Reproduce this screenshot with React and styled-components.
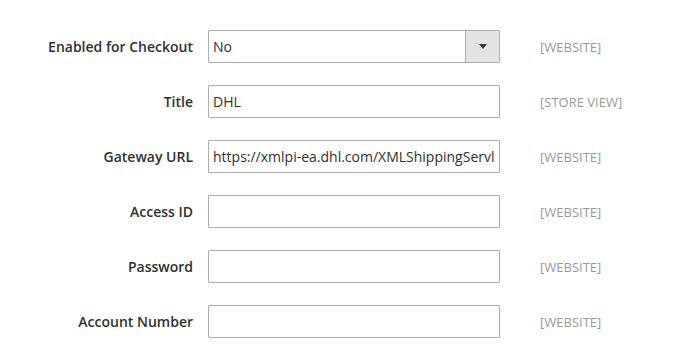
import React from "react";
import styled, { createGlobalStyle } from "styled-components";

const Global = createGlobalStyle`
  html, body { margin: 0; padding: 0; background: #fff; }
  body { font-family: "Open Sans", "Liberation Sans", sans-serif; color: #303030; }
`;

const Form = styled.div`
  display: grid;
  grid-template-columns: 193px 292px 175px;
  column-gap: 15px;
  row-gap: 22px;
  padding-top: 30px;
  align-items: center;
`;

const Label = styled.label`
  text-align: right;
  font-size: 14px;
  font-weight: 600;
  color: #303030;
  line-height: 33px;
`;

const Input = styled.input`
  box-sizing: border-box;
  width: 292px;
  height: 33px;
  border: 1px solid #adadad;
  border-radius: 1px;
  padding: 0 5px 0 4px;
  font-family: "Open Sans", "Liberation Sans", sans-serif;
  font-size: 14px;
  color: #303030;
  background: #fff;
  outline: none;
`;

const Select = styled.div`
  box-sizing: border-box;
  width: 292px;
  height: 33px;
  border: 1px solid #adadad;
  border-radius: 1px;
  display: flex;
  align-items: stretch;
  background: #fff;
`;

const SelectValue = styled.span`
  flex: 1;
  display: flex;
  align-items: center;
  padding-left: 4px;
  font-size: 14px;
  color: #303030;
`;

const SelectButton = styled.span`
  width: 33px;
  border-left: 1px solid #adadad;
  background: #e3e3e3;
  display: flex;
  align-items: center;
  justify-content: center;
`;

const Arrow = styled.span`
  width: 0;
  height: 0;
  border-left: 4px solid transparent;
  border-right: 4px solid transparent;
  border-top: 5px solid #41362f;
`;

const Scope = styled.span`
  padding-left: 25px;
  font-size: 13px;
  color: #999;
`;

const rows = [
  { label: "Enabled for Checkout", type: "select", value: "No", scope: "[WEBSITE]" },
  { label: "Title", value: "DHL", scope: "[STORE VIEW]" },
  { label: "Gateway URL", value: "https://xmlpi-ea.dhl.com/XMLShippingServlet", scope: "[WEBSITE]" },
  { label: "Access ID", value: "", scope: "[WEBSITE]" },
  { label: "Password", value: "", scope: "[WEBSITE]" },
  { label: "Account Number", value: "", scope: "[WEBSITE]" },
];

export default function App() {
  return (
    <>
      <Global />
      <Form>
        {rows.map((r) => (
          <React.Fragment key={r.label}>
            <Label>{r.label}</Label>
            {r.type === "select" ? (
              <Select>
                <SelectValue>{r.value}</SelectValue>
                <SelectButton>
                  <Arrow />
                </SelectButton>
              </Select>
            ) : (
              <Input defaultValue={r.value} readOnly />
            )}
            <Scope>{r.scope}</Scope>
          </React.Fragment>
        ))}
      </Form>
    </>
  );
}
